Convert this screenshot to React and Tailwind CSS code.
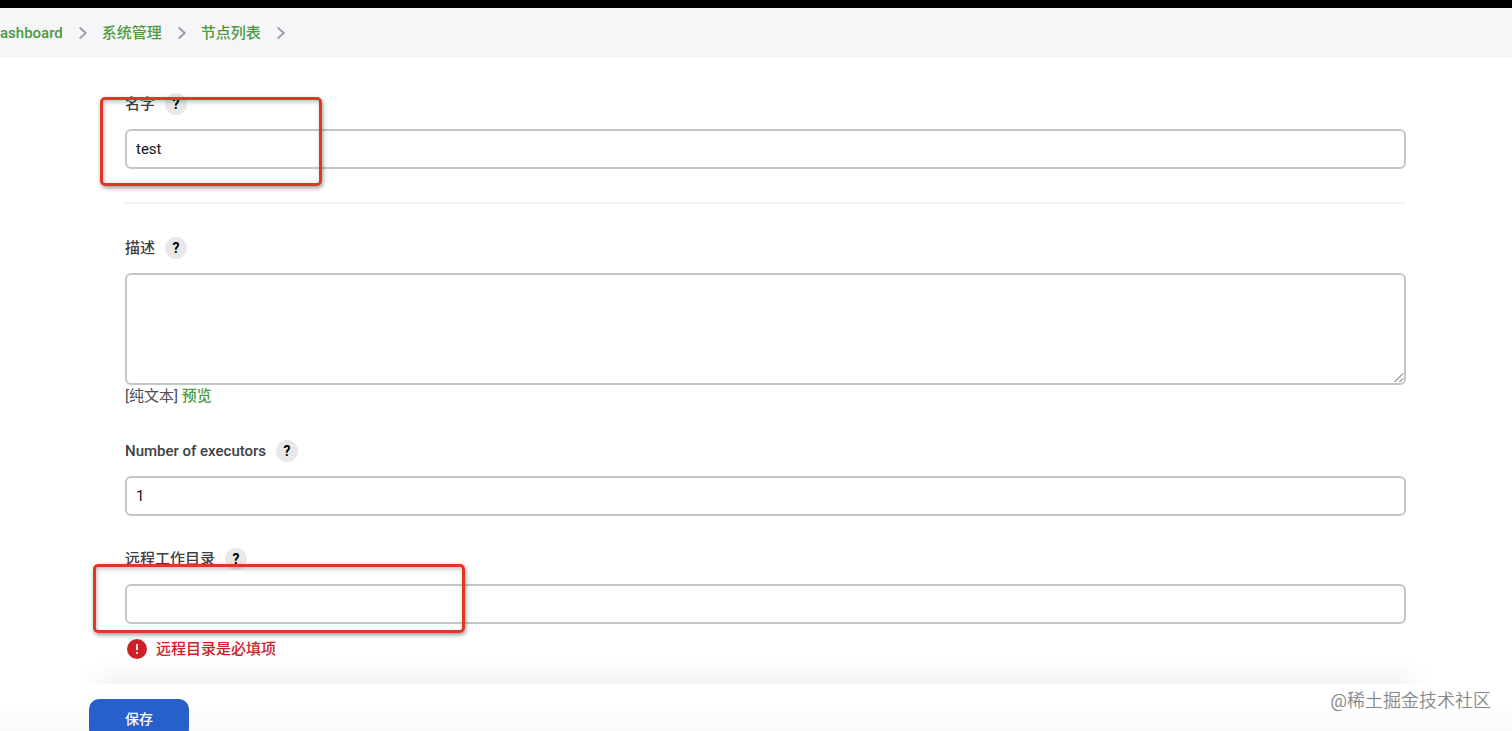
import React from "react";

function Chevron() {
  return (
    <svg className="h-3 w-2 shrink-0" viewBox="0 0 8 12" fill="none" stroke="#9a9aa2" strokeWidth="1.8" strokeLinecap="round" strokeLinejoin="round" aria-hidden="true">
      <path d="M1.2 1 6.8 6 1.2 11" />
    </svg>
  );
}

function Crumb({ children }) {
  return (
    <li className="flex items-center gap-4">
      <a href="#" className="text-[#4b9a41]">{children}</a>
      <Chevron />
    </li>
  );
}

function Label({ htmlFor, children }) {
  return (
    <div className="flex h-[22px] items-center gap-[10px]">
      <label htmlFor={htmlFor} className="font-medium text-[#404045]">{children}</label>
      <button
        type="button"
        aria-label="帮助"
        className="flex size-[22px] items-center justify-center rounded-full bg-[#e8e8e8] text-sm font-bold text-black"
      >
        ?
      </button>
    </div>
  );
}

const control =
  "block w-full rounded-md border-2 border-[#c4c7ca] bg-white px-[9px] text-[15px] text-[#14141f] outline-none";
const highlight =
  "pointer-events-none absolute rounded-[5px] border-[3px] border-[#dc3727] shadow-[1px_2px_4px_rgba(0,0,0,0.4),inset_1px_2px_4px_rgba(0,0,0,0.25)]";

export default function App() {
  return (
    <div className="flex h-screen flex-col overflow-hidden bg-white text-[15px] leading-[22px] font-['Roboto','Noto_Sans_CJK_SC',sans-serif]">
      <div className="h-2 shrink-0 bg-black" />
      <nav className="flex h-[50px] shrink-0 items-center bg-[#f6f6f9]">
        <ol className="flex items-center gap-[15px] font-medium">
          <Crumb>ashboard</Crumb>
          <Crumb>系统管理</Crumb>
          <Crumb>节点列表</Crumb>
        </ol>
      </nav>

      <form className="flex flex-col" onSubmit={(e) => e.preventDefault()}>
        <div className="pt-[35px] pr-[106px] pb-6 pl-[125px]">
          <div className="relative flex flex-col gap-[14px]">
            <Label htmlFor="name">名字</Label>
            <input id="name" type="text" defaultValue="test" className={`${control} h-10`} />
            <div className={`${highlight} top-1 -left-[25px] h-[89px] w-[222px]`} />
          </div>

          <hr className="my-[33px] border-t-2 border-[#f3f3f3]" />

          <div className="relative flex flex-col gap-[14px]">
            <Label htmlFor="description">描述</Label>
            <textarea id="description" className={`${control} h-28 resize-none py-2`} />
            <svg className="pointer-events-none absolute right-[2px] bottom-[2px] size-[10px]" viewBox="0 0 10 10" stroke="#555" strokeWidth="1" aria-hidden="true">
              <path d="M0.5 9 9 0.5M5.5 9 9 5.5" />
            </svg>
          </div>
          <p className="text-[#4d4d52]">
            [纯文本] <a href="#" className="font-medium text-[#4b9a41]">预览</a>
          </p>

          <div className="mt-[33px] flex flex-col gap-[14px]">
            <Label htmlFor="executors">Number of executors</Label>
            <input id="executors" type="text" defaultValue="1" className={`${control} h-10`} />
          </div>

          <div className="relative mt-8 flex flex-col gap-[14px]">
            <Label htmlFor="remote">远程工作目录</Label>
            <input id="remote" type="text" aria-describedby="remote-error" className={`${control} h-10`} />
            <div className={`${highlight} top-4 -left-8 h-[69px] w-[372px]`} />
            <div id="remote-error" className="flex items-center gap-[9px] pl-[2px] font-medium text-[#cc2127]">
              <svg className="size-5 shrink-0" viewBox="0 0 20 20" aria-hidden="true">
                <circle cx="10" cy="10" r="10" fill="#cc2127" />
                <path d="M10 5v6.2M10 13v2" stroke="#fff" strokeWidth="1.7" />
              </svg>
              <span>远程目录是必填项</span>
            </div>
          </div>
        </div>

        <div className="relative">
          <div className="absolute -top-6 right-[82px] left-20 h-6 bg-linear-to-b from-transparent to-black/5 mask-x-from-97%" />
          <div className="flex items-start justify-between bg-linear-to-b from-white from-40% to-[#f7f7f7] pt-[15px] pr-[21px] pl-[89px]">
            <button type="submit" className="h-10 w-[100px] rounded-[10px] bg-[#275fcb] text-sm font-medium text-white">
              保存
            </button>
            <span className="-mt-3 text-lg font-light text-[#808080] text-shadow-[0_0_1px_rgba(0,0,0,0.3)]">@稀土掘金技术社区</span>
          </div>
        </div>
      </form>
    </div>
  );
}
